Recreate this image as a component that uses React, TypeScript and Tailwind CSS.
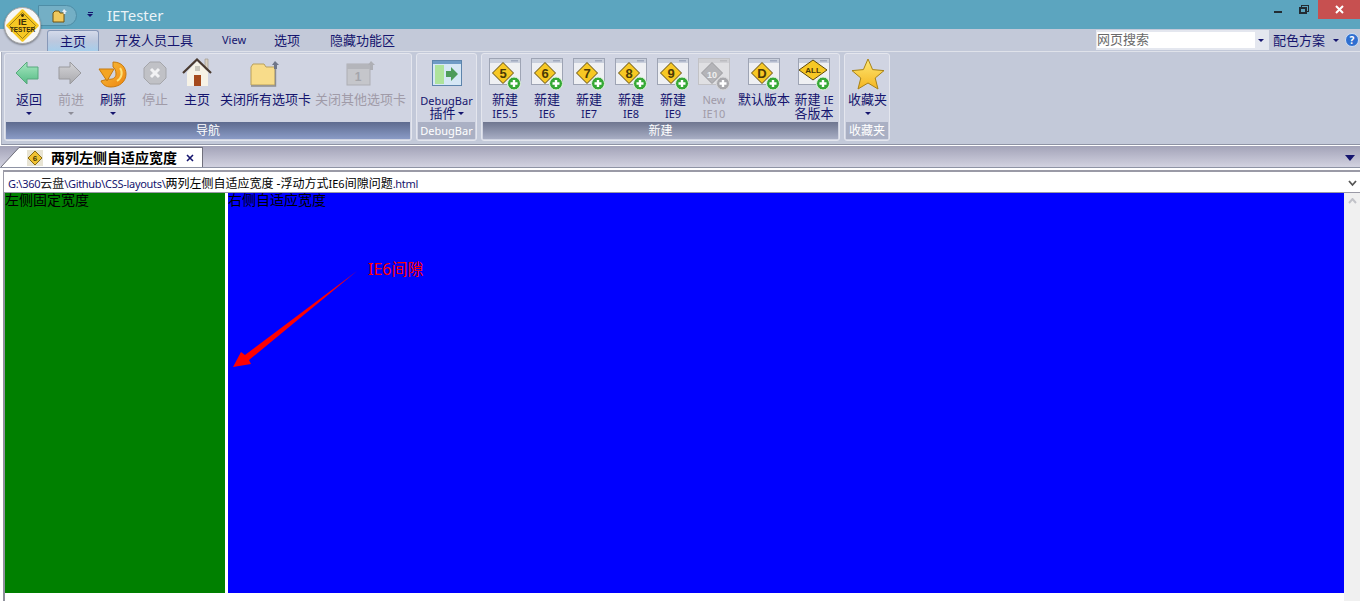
import type { ReactNode } from 'react'

const font = { fontFamily: '"Noto Sans", "Noto Sans CJK SC", sans-serif' }

function Caret({ color = 'border-t-[#15156e]' }: { color?: string }) {
  return <span className={`block w-0 h-0 border-x-[3px] border-x-transparent border-t-[3px] ${color}`} />
}

function VersionIcon({ label, disabled, wide }: { label: string; disabled?: boolean; wide?: boolean }) {
  const yellow = disabled ? '#b4b4b8' : '#f7c824'
  const edge = disabled ? '#9a9a9e' : '#5e4a0c'
  return (
    <svg width="32" height="33" viewBox="0 0 32 33">
      <rect x="0.5" y="0.5" width="31" height="26" fill={disabled ? '#e0e0e3' : '#eff0f3'} stroke={disabled ? '#c2c2c6' : '#9ea4b4'} />
      <rect x="1" y="1" width="30" height="4" fill={disabled ? '#d0d0d4' : '#c9cfdc'} />
      <rect x="22" y="2" width="7" height="1.5" fill={disabled ? '#bcbcc0' : '#9fa8bd'} />
      {wide ? (
        <path d="M15 2 L29 12 L15 22 L1 12 Z" fill={yellow} stroke={edge} strokeLinejoin="round" />
      ) : (
        <path d="M14 4.5 L24.5 15 L14 25.5 L3.5 15 Z" fill={yellow} stroke={edge} strokeLinejoin="round" />
      )}
      <text x={wide ? 15 : 14} y={wide ? 15 : 19.5} textAnchor="middle" fontSize={wide ? 8 : label.length > 1 ? 9 : 13} fontWeight="700" fill={disabled ? '#efefef' : '#4a3a05'} fontFamily="Liberation Sans">{label}</text>
      <circle cx="25" cy="25.5" r="6.5" fill={disabled ? '#a8a8ac' : '#35a835'} stroke={disabled ? '#d8d8da' : '#e4f3e0'} />
      <path d="M21.5 25.5 H28.5 M25 22 V29" stroke="#fff" strokeWidth="2.4" />
    </svg>
  )
}

function BackIcon() {
  return (
    <svg className="mt-[2px] mr-[5px]" width="26" height="26" viewBox="0 0 26 26">
      <defs>
        <linearGradient id="backFill" x1="0" y1="0" x2="0" y2="1">
          <stop offset="0" stopColor="#a8e8c2" />
          <stop offset="1" stopColor="#55bb84" />
        </linearGradient>
      </defs>
      <path d="M2 13 L13 2 V7 H24 V19 H13 V24 Z" fill="url(#backFill)" stroke="#57a97c" />
    </svg>
  )
}

function ForwardIcon() {
  return (
    <svg className="mt-[2px] mr-[3px]" width="26" height="26" viewBox="0 0 26 26">
      <defs>
        <linearGradient id="fwdFill" x1="0" y1="0" x2="0" y2="1">
          <stop offset="0" stopColor="#d4d4d8" />
          <stop offset="1" stopColor="#a9a9ad" />
        </linearGradient>
      </defs>
      <path d="M24 13 L13 2 V7 H2 V19 H13 V24 Z" fill="url(#fwdFill)" stroke="#9a9a9e" />
    </svg>
  )
}

function RefreshIcon() {
  return (
    <svg className="mt-[2px]" width="30" height="30" viewBox="0 0 30 30">
      <defs>
        <linearGradient id="refreshFill" x1="0" y1="0" x2="1" y2="1">
          <stop offset="0" stopColor="#f9c23c" />
          <stop offset="1" stopColor="#ee8410" />
        </linearGradient>
      </defs>
      <path d="M15 2 C24 2 28 8 28 14 C28 22 21 27 13 27 C8 27 5 25 3 21 L10 19 C14 20 18 18 18 14 C18 11 17 8 15 7 Z" fill="url(#refreshFill)" stroke="#c67a10" />
      <path d="M1 9 L16 9 L9 21 Z" fill="#f4a422" stroke="#c67a10" strokeLinejoin="round" />
      <path d="M22 8 C25 12 24 18 19 21" fill="none" stroke="#fde27a" strokeWidth="2" />
    </svg>
  )
}

function StopIcon() {
  return (
    <svg className="mt-[2px]" width="26" height="26" viewBox="0 0 26 26">
      <path d="M8 2 H18 L24 8 V18 L18 24 H8 L2 18 V8 Z" fill="#c0c1c6" stroke="#a4a5aa" />
      <path d="M9 9 L17 17 M17 9 L9 17" stroke="#f2f2f4" strokeWidth="3" />
    </svg>
  )
}

function HomeIcon() {
  return (
    <svg width="32" height="30" viewBox="0 0 32 30">
      <path d="M24 1 H27 V12 H24 Z" fill="#d8cfc0" stroke="#9c9284" strokeWidth="0.6" />
      <path d="M6 14 L16 3 L27 14 V28 H6 Z" fill="#f6f2e6" />
      <path d="M2 15 L16 1.5 L30 15" fill="none" stroke="#4a3a30" strokeWidth="2.2" />
      <rect x="13" y="17" width="7" height="11" fill="#a5491c" />
      <rect x="14" y="8" width="5" height="5" fill="#c9c6bc" />
    </svg>
  )
}

function FolderIcon({ disabled }: { disabled?: boolean }) {
  if (disabled) {
    return (
      <svg width="32" height="30" viewBox="0 0 32 30">
        <rect x="2" y="6" width="23" height="21" fill="#c5c6cb" stroke="#adaeb4" />
        <rect x="2" y="6" width="23" height="5" fill="#b4b5bb" />
        <text x="13" y="23" textAnchor="middle" fontSize="12" fontWeight="700" fill="#a4a5ab" fontFamily="Liberation Sans">1</text>
        <path d="M26 3 L30 7 H28 V12 H25 V7 H23 Z" fill="#aeafb5" />
      </svg>
    )
  }
  return (
    <svg className="mr-[4px]" width="32" height="30" viewBox="0 0 32 30">
      <path d="M3 9 L5 6 H16 L18 9 H27 V27 H3 Z" fill="#f8dc8a" stroke="#b9a05c" />
      <path d="M27.5 10 V28 H3" fill="none" stroke="#8d8d90" strokeWidth="1.4" />
      <path d="M27 3 L31 7 H29 V11 H26 V7 H24 Z" fill="#6f7688" />
    </svg>
  )
}

function StarIcon() {
  return (
    <svg width="34" height="32" viewBox="0 0 34 32">
      <defs>
        <linearGradient id="starFill" x1="0" y1="0" x2="0" y2="1">
          <stop offset="0" stopColor="#fde875" />
          <stop offset="1" stopColor="#f5b520" />
        </linearGradient>
      </defs>
      <path d="M17 1 L21.6 11.6 L33 12.6 L24.2 20 L27 31 L17 25 L7 31 L9.8 20 L1 12.6 L12.4 11.6 Z" fill="url(#starFill)" stroke="#a88216" />
    </svg>
  )
}

function DebugIcon() {
  return (
    <svg className="mt-[2px]" width="30" height="27" viewBox="0 0 30 27">
      <rect x="0.5" y="0.5" width="29" height="25" fill="#d6e7f5" stroke="#5d84ac" />
      <rect x="1" y="1" width="28" height="3" fill="#6f9bc6" />
      <rect x="3" y="5" width="9" height="19" fill="#aee39b" />
      <path d="M14 11 H19 V7 L26 14 L19 21 V17 H14 Z" fill="#4e9c5a" />
    </svg>
  )
}

function RibbonButton({ width, icon, lines, disabled, caret }: {
  width: string
  icon: ReactNode
  lines: ReactNode[]
  disabled?: boolean
  caret?: boolean
}) {
  return (
    <div className={`${width} flex flex-col items-center`}>
      <div className="h-[35px] flex items-start justify-center">{icon}</div>
      <div className={`flex flex-col items-center gap-[1px] leading-[13px] text-[13px] whitespace-nowrap ${disabled ? 'text-[#a09ba8]' : 'text-[#15156e]'}`}>
        {lines.map((l, i) => <span key={i}>{l}</span>)}
      </div>
      {caret && (
        <div className="mt-[6px]">
          <Caret color={disabled ? 'border-t-[#8d8d98]' : 'border-t-[#15156e]'} />
        </div>
      )}
    </div>
  )
}

function Group({ width, caption, captionClass, children }: {
  width: string
  caption: string
  captionClass: string
  children: ReactNode
}) {
  return (
    <div className={`${width} h-[88px] rounded-[3px] border border-[#e4e6ee] bg-[#d0d4e2] p-[1px] flex flex-col shrink-0`}>
      <div className="h-[67px] pt-[3px] flex">{children}</div>
      <div className={`h-[17px] text-center leading-[17px] text-white ${captionClass}`}>{caption}</div>
    </div>
  )
}

const small = 'text-[11px]'

export default function App() {
  return (
    <div className="relative w-[1360px] h-[601px] overflow-hidden bg-white flex flex-col" style={font}>
      {/* title bar */}
      <div className="h-[29px] bg-[#5ca5bf] flex items-start shrink-0">
        <div className="ml-[38px] mt-[5px] w-[39px] h-[21px] rounded-r-full bg-[#74afc5] border border-[#4e8da6] flex items-center pl-[13px]">
          <svg width="15" height="14" viewBox="0 0 15 14">
            <path d="M1 4 L3 2 H7 L8 4 H12 V13 H1 Z" fill="#f1c95c" stroke="#6e5312" />
            <path d="M12 0 L15 3 H13.5 V5 H11.5 V3 H10 Z" fill="#e8eef4" />
          </svg>
        </div>
        <div className="ml-[10px] mt-[12px] flex flex-col items-center gap-[1px]">
          <span className="block w-[5px] h-[1px] bg-[#15156e]" />
          <Caret />
        </div>
        <div className="ml-[14px] mt-[5px] text-[15px] leading-[20px] text-[#eaf3f7]">IETester</div>
        <div className="ml-auto flex items-start">
          <div className="w-[8px] h-[2px] mt-[11px] bg-[#222c33]" />
          <div className="ml-[17px] mt-[5px] relative w-[10px] h-[9px]">
            <div className="absolute right-0 top-0 w-[8px] h-[7px] border border-[#222c33]" />
            <div className="absolute left-0 bottom-0 w-[8px] h-[7px] border-2 border-[#222c33] bg-[#5ca5bf]" />
          </div>
          <div className="ml-[9px] w-[42px] h-[19px] bg-[#c75050] flex items-center justify-center">
            <svg width="9" height="9" viewBox="0 0 9 9"><path d="M1 1 L8 8 M8 1 L1 8" stroke="#fff" strokeWidth="2" /></svg>
          </div>
        </div>
      </div>

      {/* menu row */}
      <div className="h-[23px] bg-[#c3c9d9] flex items-end shrink-0 border-b border-[#dfe2ea] text-[#15156e] text-[13px] leading-[18px]">
        <div className="ml-[47px] w-[52px] h-[21px] pt-[1px] rounded-t-[3px] border border-b-0 border-[#8798b8] bg-gradient-to-b from-[#d4daea] via-[#bcc8de] to-[#a6cdea] text-center">主页</div>
        <div className="ml-[16px] h-[20px]">开发人员工具</div>
        <div className="ml-[29px] h-[20px] text-[11px]">View</div>
        <div className="ml-[28px] h-[20px]">选项</div>
        <div className="ml-[30px] h-[20px]">隐藏功能区</div>
        <div className="ml-auto flex items-center h-[22px] pr-[1px]">
          <div className="w-[173px] h-[20px] bg-[#e4e7ef] flex items-center pr-[5px]">
            <div className="ml-[1px] w-[158px] h-[16px] bg-white text-[13px] leading-[15px] text-[#6a6a6a]">网页搜索</div>
            <div className="ml-auto"><Caret /></div>
          </div>
          <span className="ml-[4px]">配色方案</span>
          <span className="ml-[8px]"><Caret /></span>
          <span className="ml-[6px] w-[14px] h-[14px] rounded-full bg-[#2f6fd0] border border-[#cfe0f5] text-white text-[10px] leading-[12px] font-bold text-center">?</span>
        </div>
      </div>

      {/* ribbon */}
      <div className="h-[93px] bg-[#c3c9d9] flex gap-[4px] ml-[1px] pl-[2px] pt-[1px] shrink-0 border-l border-b border-l-[#a8adbd] border-b-[#8e93a4]">
        <Group width="w-[408px]" caption="导航" captionClass="text-[12px] bg-gradient-to-b from-[#5e6b8f] to-[#8a9bc6]">
          <div className="w-[2px] shrink-0" />
          <RibbonButton width="w-[42px]" icon={<BackIcon />} lines={['返回']} caret />
          <RibbonButton width="w-[42px]" icon={<ForwardIcon />} lines={['前进']} caret disabled />
          <RibbonButton width="w-[42px]" icon={<RefreshIcon />} lines={['刷新']} caret />
          <RibbonButton width="w-[42px]" icon={<StopIcon />} lines={['停止']} disabled />
          <RibbonButton width="w-[42px]" icon={<HomeIcon />} lines={['主页']} />
          <RibbonButton width="w-[95px]" icon={<FolderIcon />} lines={['关闭所有选项卡']} />
          <RibbonButton width="w-[95px]" icon={<FolderIcon disabled />} lines={['关闭其他选项卡']} disabled />
        </Group>
        <Group width="w-[61px]" caption="DebugBar" captionClass="text-[11px] bg-[#aab0c4]">
          <div className="w-full flex flex-col items-center text-[#15156e]">
            <div className="h-[35px] flex items-start"><DebugIcon /></div>
            <div className="mt-[2px] text-[11px] leading-[12px]">DebugBar</div>
            <div className="flex items-center gap-[2px] text-[13px] leading-[13px]">插件<Caret /></div>
          </div>
        </Group>
        <Group width="w-[359px]" caption="新建" captionClass="text-[12px] bg-gradient-to-b from-[#6f7690] to-[#a8aec4]">
          <div className="w-[1px] shrink-0" />
          <RibbonButton width="w-[42px]" icon={<VersionIcon label="5" />} lines={['新建', <span className={small}>IE5.5</span>]} />
          <RibbonButton width="w-[42px]" icon={<VersionIcon label="6" />} lines={['新建', <span className={small}>IE6</span>]} />
          <RibbonButton width="w-[42px]" icon={<VersionIcon label="7" />} lines={['新建', <span className={small}>IE7</span>]} />
          <RibbonButton width="w-[42px]" icon={<VersionIcon label="8" />} lines={['新建', <span className={small}>IE8</span>]} />
          <RibbonButton width="w-[42px]" icon={<VersionIcon label="9" />} lines={['新建', <span className={small}>IE9</span>]} />
          <RibbonButton width="w-[40px]" icon={<VersionIcon label="10" disabled />} lines={[<span className={small}>New</span>, <span className={small}>IE10</span>]} disabled />
          <RibbonButton width="w-[60px]" icon={<VersionIcon label="D" />} lines={['默认版本']} />
          <RibbonButton width="w-[40px]" icon={<VersionIcon label="ALL" wide />} lines={[<>新建 <span className={small}>IE</span></>, '各版本']} />
        </Group>
        <Group width="w-[46px]" caption="收藏夹" captionClass="text-[12px] bg-[#aab0c4]">
          <div className="w-[1px] shrink-0" />
          <RibbonButton width="w-[42px]" icon={<StarIcon />} lines={['收藏夹']} caret />
        </Group>
      </div>

      {/* tab strip */}
      <div className="mt-[1px] h-[22px] bg-gradient-to-b from-[#a3a3b8] to-[#d2d2e0] flex items-end shrink-0 border-b border-[#8e93a4]">
        <svg className="ml-[1px] shrink-0" width="20" height="20" viewBox="0 0 20 20">
          <path d="M0 20 L18 1 H20 V20 Z" fill="#fff" />
          <path d="M0 20 L18 0.5 H20" fill="none" stroke="#70707c" />
        </svg>
        <div className="w-[182px] h-[20px] bg-white border-t border-r border-[#70707c] flex items-center">
          <div className="ml-[6px] w-[16px] h-[16px] bg-[#e8e4d4] flex items-center justify-center">
            <svg width="14" height="14" viewBox="0 0 14 14">
              <path d="M7 0 L14 7 L7 14 L0 7 Z" fill="#f1c232" stroke="#8a6a10" />
              <text x="7" y="10" textAnchor="middle" fontSize="8" fontWeight="700" fill="#4a3a05" fontFamily="Liberation Sans">6</text>
            </svg>
          </div>
          <span className="ml-[8px] text-[14px] font-bold text-black leading-[18px] whitespace-nowrap">两列左侧自适应宽度</span>
          <svg className="ml-[9px]" width="8" height="8" viewBox="0 0 8 8"><path d="M1 1 L7 7 M7 1 L1 7" stroke="#15156e" strokeWidth="1.6" /></svg>
        </div>
        <div className="ml-auto mr-[5px] mb-[6px] w-0 h-0 border-x-[5px] border-x-transparent border-t-[6px] border-t-[#15156e]" />
      </div>

      {/* address row */}
      <div className="mt-[2px] h-[23px] ml-[3px] border-l border-t-2 border-b border-[#9a9aa6] bg-white flex items-center shrink-0 pl-[4px] pt-[3px]">
        <span className="text-[11px] leading-[18px] text-[#15156e] whitespace-nowrap tracking-[-0.3px]">G:\360<span className="text-[12px] tracking-normal text-[#222]">云盘</span>\Github\CSS-layouts\<span className="text-[12px] tracking-normal text-black">两列左侧自适应宽度 -浮动方式<span className="text-[11px]">IE6</span>间隙问题</span>.html</span>
        <svg className="ml-auto mr-[3px]" width="9" height="7" viewBox="0 0 9 7"><path d="M1 1 L4.5 5 L8 1" fill="none" stroke="#555" strokeWidth="1.8" /></svg>
      </div>

      {/* page content */}
      <div className="flex-1 flex min-h-0">
        <div className="w-[3px] bg-white shrink-0" />
        <div className="w-[2px] bg-[#8f919c] shrink-0" />
        <div className="flex-1 flex flex-col">
          <div className="h-[400px] flex">
            <div className="w-[220px] bg-[#008000] text-[14px] leading-[14px] text-black whitespace-nowrap">左侧固定宽度</div>
            <div className="w-[3px] bg-white" />
            <div className="flex-1 bg-[#0000ff] text-[14px] leading-[14px] text-black whitespace-nowrap">右侧自适应宽度</div>
          </div>
        </div>
        <div className="w-[16px] bg-[#f0f0f0] flex justify-center pt-[5px] shrink-0">
          <svg width="9" height="6" viewBox="0 0 9 6"><path d="M1 5 L4.5 1 L8 5" fill="none" stroke="#c2c3c9" strokeWidth="2" /></svg>
        </div>
      </div>

      {/* annotation drawn over the page */}
      <svg className="absolute left-[225px] top-[265px]" width="140" height="110" viewBox="225 265 140 110">
        <path d="M357 271 L245 355 L241 352 L233 367 L251 364 L249 360 Z" fill="#ff0000" />
      </svg>
      <div className="absolute left-[368px] top-[259px] text-[16px] leading-[20px] text-[#ff0000] whitespace-nowrap">IE6间隙</div>

      {/* application button */}
      <div className="absolute left-[4px] top-[7px] w-[37px] h-[37px] rounded-full bg-[#f7f7f7] border border-[#a8a8a8] shadow-[0_1px_2px_rgba(0,0,0,0.4)] flex items-center justify-center">
        <svg width="33" height="33" viewBox="0 0 33 33">
          <path d="M16.5 1.5 L31.5 16.5 L16.5 31.5 L1.5 16.5 Z" fill="#f7c824" stroke="#f7c824" strokeWidth="2.5" strokeLinejoin="round" />
          <path d="M16.5 3.5 L29.5 16.5 L16.5 29.5 L3.5 16.5 Z" fill="none" stroke="#7a6310" strokeWidth="0.7" strokeLinejoin="round" />
          <circle cx="16.5" cy="6.5" r="1.4" fill="#3a2f08" />
          <text x="16.5" y="16" textAnchor="middle" fontSize="9" fontWeight="700" fill="#3a2f08" fontFamily="Liberation Sans">IE</text>
          <text x="16.5" y="23" textAnchor="middle" fontSize="6.5" fontWeight="700" fill="#3a2f08" fontFamily="Liberation Sans">TESTER</text>
        </svg>
      </div>
    </div>
  )
}
